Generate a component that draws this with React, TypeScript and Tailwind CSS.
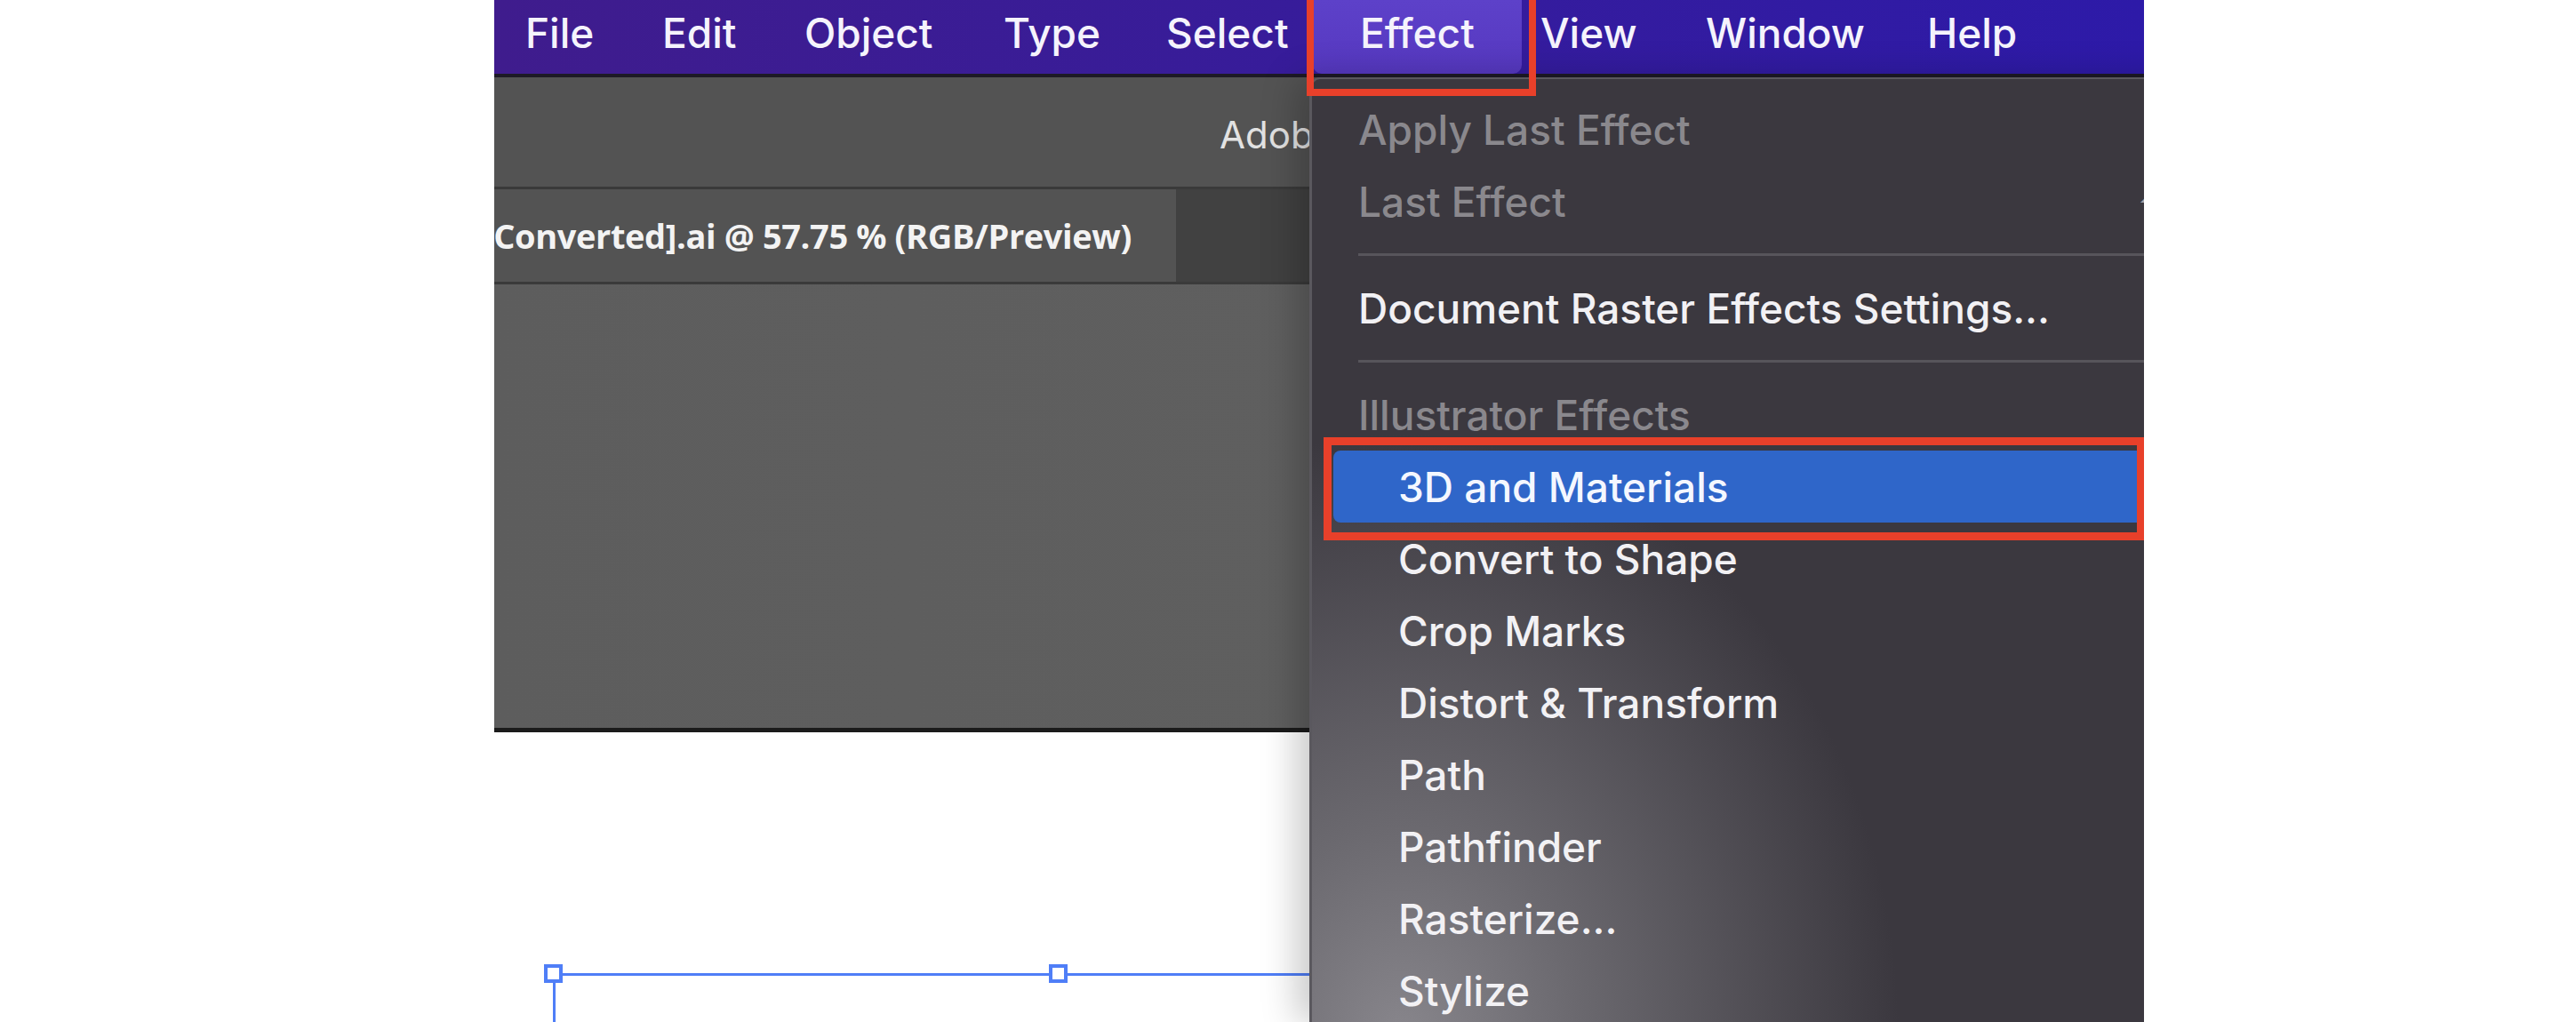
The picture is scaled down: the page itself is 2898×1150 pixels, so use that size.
const menuFont = { fontFamily: "Inter, 'Noto Sans', sans-serif" };

const topItems = [
  { label: "File", w: "w-[154px]" },
  { label: "Edit", w: "w-[160px]" },
  { label: "Object", w: "w-[224px]" },
  { label: "Type", w: "w-[183px]" },
  { label: "Select", w: "w-[165px]" },
];

const subItems = [
  "Convert to Shape",
  "Crop Marks",
  "Distort & Transform",
  "Path",
  "Pathfinder",
  "Rasterize...",
  "Stylize",
];

function MenuBar() {
  return (
    <div
      className="h-[83px] shrink-0 flex items-stretch pl-[35px] bg-gradient-to-r from-[#3f1c8d] to-[#2d1aa8] text-[46px] font-medium text-[#f5f3fc] leading-none"
      style={menuFont}
    >
      {topItems.map((item) => (
        <div key={item.label} className={`${item.w} shrink-0 flex items-center pb-[10px]`}>
          {item.label}
        </div>
      ))}
      <div className="w-[235px] shrink-0 flex items-center pl-[53px] pb-[10px] rounded-b-[10px] bg-gradient-to-b from-[#5d41c9] to-[#5638c0]">
        Effect
      </div>
      <div className="w-[21px] shrink-0" />
      <div className="w-[186px] shrink-0 flex items-center pb-[10px]">View</div>
      <div className="w-[249px] shrink-0 flex items-center pb-[10px]">Window</div>
      <div className="shrink-0 flex items-center pb-[10px]">Help</div>
    </div>
  );
}

function Separator() {
  return (
    <div className="h-[39px] flex items-center pl-[52px]">
      <div className="h-[3px] flex-1 bg-[#57555b]" />
    </div>
  );
}

function EffectMenu() {
  return (
    <div
      className="absolute left-[917px] top-[87px] bottom-0 w-[1120px] rounded-tl-[12px] border-l-[3px] border-t-[2px] border-[#5a585e] bg-[radial-gradient(ellipse_560px_680px_at_100px_1080px,#88868c_0%,#6b696f_35%,#3b383f_100%)] shadow-[-14px_0_40px_rgba(0,0,0,0.22)] pt-[16px] text-[46px] font-medium leading-none"
      style={menuFont}
    >
      <div className="h-[81px] flex items-center pl-[52px] text-[#8a888d]">Apply Last Effect</div>
      <div className="h-[81px] flex items-center pl-[52px] text-[#8a888d]">
        <span className="w-[876px] shrink-0">Last Effect</span>
        <span className="text-[#a6a4aa]">⇧⌘E</span>
      </div>
      <Separator />
      <div className="h-[81px] flex items-center pl-[52px] text-[#f2f1f4]">
        Document Raster Effects Settings...
      </div>
      <Separator />
      <div className="h-[81px] flex items-center pl-[52px] text-[#8a888d]">Illustrator Effects</div>
      <div className="h-[81px] px-[24px]">
        <div className="h-full rounded-[8px] bg-[#2f66c9] flex items-center pl-[73px] text-[#f4f7ff]">
          3D and Materials
        </div>
      </div>
      {subItems.map((s) => (
        <div key={s} className="h-[81px] flex items-center pl-[97px] text-[#f2f1f4]">
          {s}
        </div>
      ))}
    </div>
  );
}

function Selection() {
  return (
    <svg className="absolute left-0 top-0" width="920" height="326">
      <line x1="75" y1="272.5" x2="920" y2="272.5" stroke="#4f7ef7" strokeWidth="3" />
      <line x1="67.5" y1="280" x2="67.5" y2="326" stroke="#4f7ef7" strokeWidth="3" />
      <rect x="58" y="263" width="17" height="17" fill="#ffffff" stroke="#4f7ef7" strokeWidth="4" />
      <rect x="626" y="263" width="17" height="17" fill="#ffffff" stroke="#4f7ef7" strokeWidth="4" />
    </svg>
  );
}

export default function App() {
  return (
    <div className="w-[2898px] h-[1150px] bg-white flex">
      <div className="w-[556px] shrink-0" />
      <div className="relative w-[1856px] h-[1150px] shrink-0 overflow-hidden flex flex-col">
        <MenuBar />
        <div className="h-[4px] shrink-0 bg-[#1d1a26]" />
        <div className="h-[123px] shrink-0 bg-[#535353] flex items-center pl-[816px] pt-[6px]">
          <span
            className="text-[42px] text-[#e2e2e2] leading-none whitespace-nowrap"
            style={{ fontFamily: "Inter, sans-serif" }}
          >
            Adobe Illustrator 2022
          </span>
        </div>
        <div className="h-[3px] shrink-0 bg-[#3a3a3a]" />
        <div className="h-[104px] shrink-0 flex bg-[#414141]">
          <div className="w-[767px] shrink-0 bg-[#535353] flex items-center justify-end pr-[50px] overflow-hidden">
            <span
              className="text-[38px] font-bold text-[#f3f3f3] whitespace-nowrap leading-none tracking-[-0.01em]"
              style={{ fontFamily: "'Open Sans', sans-serif" }}
            >
              Tutorial [Converted].ai @ 57.75 % (RGB/Preview)
            </span>
          </div>
        </div>
        <div className="h-[3px] shrink-0 bg-[#3a3a3a]" />
        <div className="h-[499px] shrink-0 bg-gradient-to-r from-[#5d5d5d] to-[#616161]" />
        <div className="h-[5px] shrink-0 bg-[#1b1b1b]" />
        <div className="relative flex-1 bg-white">
          <Selection />
        </div>
        <EffectMenu />
        <div className="absolute left-[914px] top-[-8px] w-[258px] h-[116px] border-[8px] border-[#e8402a]" />
        <div className="absolute left-[933px] top-[492px] w-[924px] h-[116px] border-[9px] border-[#e8402a]" />
      </div>
    </div>
  );
}
